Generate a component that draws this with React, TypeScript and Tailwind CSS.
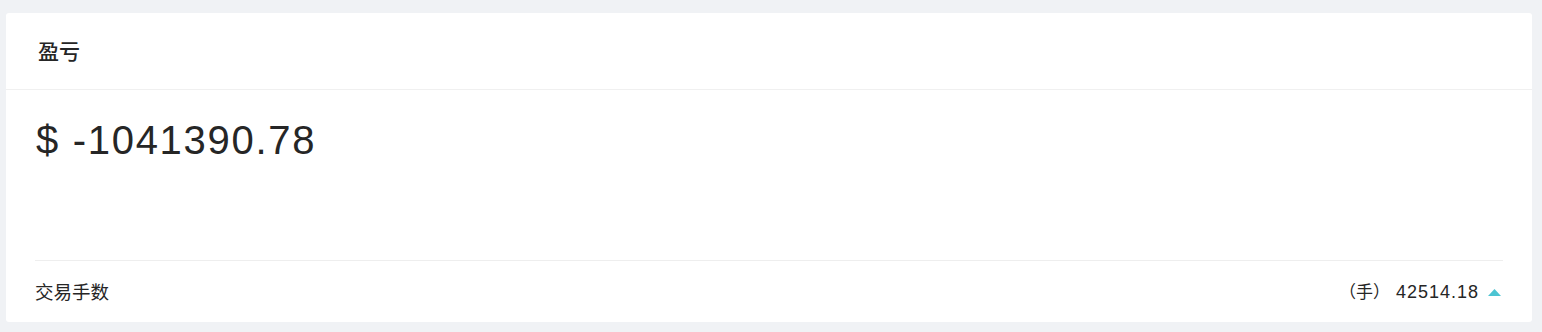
export default function App() {
  return (
    <div className="w-[1542px] h-[332px] bg-[#f0f2f5] pt-[13px] pl-[6px] pr-[10px] pb-[10px] font-['Liberation_Sans','Noto_Sans_CJK_SC',sans-serif] text-[#262626]">
      <div className="h-[309px] bg-white rounded-[3px] flex flex-col">
        {/* Header */}
        <div className="h-[77px] shrink-0 border-b border-[#f0f0f0] flex items-center pl-[32px] pt-[2px]">
          <span className="text-[21px] font-medium">盈亏</span>
        </div>

        {/* Body */}
        <div className="flex-1 flex flex-col px-[29px]">
          <div className="pt-[27px] pl-[1px] text-[40px] leading-[46px] tracking-[1.7px]">
            $ -1041390.78
          </div>
          <div className="flex-1" />
          <div className="border-t border-[#eeeeee]" />
          <div className="flex items-center justify-between h-[61px] pt-[2px] text-[18.5px]">
            <span>交易手数</span>
            <div className="flex items-center">
              <span className="text-[17px]">（手）</span>
              <span className="ml-[6px] text-[18px] tracking-[1px]">42514.18</span>
              <svg width="13" height="7" viewBox="0 0 13 7" className="ml-[9px] mr-[2px] mb-[1px]">
                <path d="M6.5 0L13 7H0Z" fill="#4cc4d2" />
              </svg>
            </div>
          </div>
        </div>
      </div>
    </div>
  );
}
